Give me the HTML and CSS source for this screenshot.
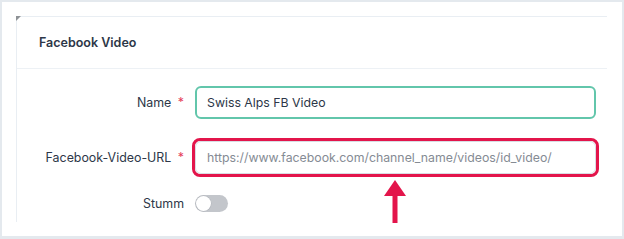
FILE: index.html
```html
<!DOCTYPE html>
<html lang="de">

<head>
    <meta charset="UTF-8">
    <meta name="viewport" content="width=device-width, initial-scale=1.0">
    <title>Facebook Video</title>
    <link rel="stylesheet" href="styles.css">
</head>

<body>
    <div class="frame">
        <div class="card">
            <div class="card-header">Facebook Video</div>

            <div class="card-body">
                <div class="field">
                    <label for="name">Name <span class="req">*</span></label>
                    <input type="text" id="name" class="input input-active" value="Swiss Alps FB Video">
                </div>

                <div class="field">
                    <label for="fb-url">Facebook-Video-URL <span class="req">*</span></label>
                    <div class="highlight">
                        <input type="text" id="fb-url" class="input"
                            placeholder="https://www.facebook.com/channel_name/videos/id_video/">
                        <!-- Markierung -->
                        <svg class="arrow" width="24" height="43" viewBox="0 0 24 43">
                            <polygon points="12,0 23,16 1,16" fill="#e3154b" />
                            <rect x="9.5" y="14" width="5" height="29" fill="#e3154b" />
                        </svg>
                    </div>
                </div>

                <div class="field field-toggle">
                    <label for="mute">Stumm</label>
                    <span class="toggle" id="mute"><span class="knob"></span></span>
                </div>
            </div>
        </div>
    </div>
</body>

</html>
```

FILE: styles.css
```css
* {
    box-sizing: border-box;
}

body {
    margin: 0;
    background-color: #fff;
    font-family: Inter, "Noto Sans", sans-serif;
    color: #2d3748;
}

.frame {
    width: 624px;
    height: 239px;
    border: 2px solid #e4e9ee;
    border-bottom-width: 3px;
    padding: 14px 0 0 14px;
    overflow: hidden;
}

.card {
    position: relative;
    width: 591px;
    height: 206px;
    border-top: 1px solid #e9eef3;
    border-left: 1px solid #e9eef3;
}

.card::before {
    content: "";
    position: absolute;
    top: -1px;
    left: -1px;
    border-top: 5px solid #8e9296;
    border-right: 5px solid transparent;
}

.card-header {
    height: 52px;
    padding: 18px 0 0 22px;
    font-size: 12.5px;
    font-weight: 600;
    border-bottom: 1px solid #edf1f5;
}

.card-body {
    padding: 17px 11px 0 0;
    display: flex;
    flex-direction: column;
    gap: 22px;
}

.field {
    display: grid;
    grid-template-columns: 167px 1fr;
    column-gap: 11px;
    align-items: center;
}

.field label {
    text-align: right;
    font-size: 12.4px;
    color: #2d3748;
}

.req {
    color: #e53e5c;
    margin-left: 3px;
}

.input {
    display: block;
    width: 100%;
    height: 33px;
    padding: 0 11px;
    border: 1px solid #d8dde3;
    border-radius: 6px;
    font-family: Inter, "Noto Sans", sans-serif;
    font-size: 12.3px;
    color: #2d3748;
    background-color: #fff;
    outline: none;
}

.input::placeholder {
    color: #858b94;
}

.input-active {
    border: 2px solid #62c6ab;
    padding: 0 10px;
}

.highlight {
    position: relative;
    margin: -3px;
    border: 3px solid #e3154b;
    border-radius: 8px;
}

.arrow {
    position: absolute;
    top: 39px;
    left: 188px;
}

.field-toggle {
    margin-top: -1px;
}

.toggle {
    display: flex;
    align-items: center;
    width: 33px;
    height: 17px;
    padding: 0 1px;
    border-radius: 9px;
    background-color: #c3c6cb;
}

.knob {
    width: 15px;
    height: 15px;
    border-radius: 50%;
    background-color: #fff;
    box-shadow: 0 0 0 0.5px #b0b4ba;
}
```
